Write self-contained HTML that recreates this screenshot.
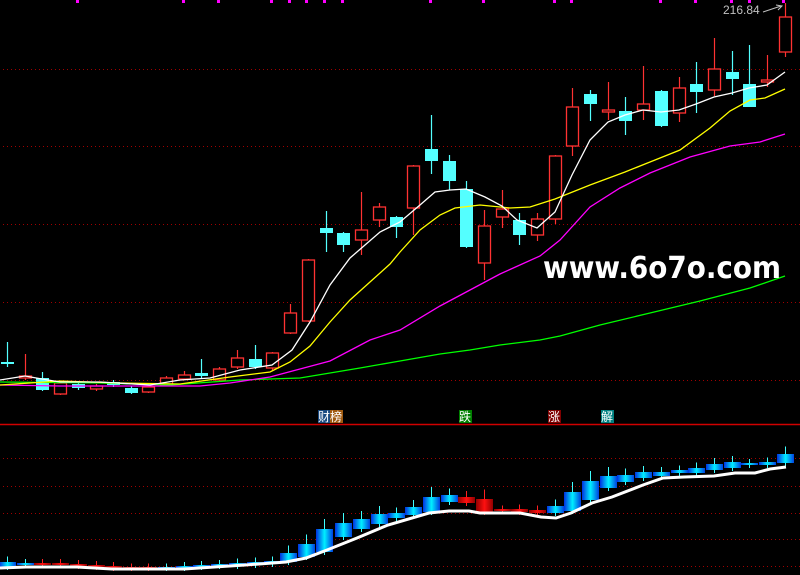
<!DOCTYPE html>
<html><head><meta charset="utf-8"><style>
html,body{margin:0;padding:0;background:#000;width:800px;height:575px;overflow:hidden}
svg{display:block}
</style></head><body>
<svg width="800" height="575" viewBox="0 0 800 575" xmlns="http://www.w3.org/2000/svg">
<defs>
<linearGradient id="bg" x1="0" x2="1" y1="0" y2="0">
<stop offset="0" stop-color="#0030e0"/><stop offset="0.5" stop-color="#00f0ff"/><stop offset="1" stop-color="#0040e0"/>
</linearGradient>
<linearGradient id="rg" x1="0" x2="1" y1="0" y2="0">
<stop offset="0" stop-color="#900000"/><stop offset="0.5" stop-color="#ff1010"/><stop offset="1" stop-color="#900000"/>
</linearGradient>
</defs>
<rect width="800" height="575" fill="#000"/>
<g stroke="#a00000" stroke-width="1" stroke-dasharray="1,3">
<line x1="3" y1="69.5" x2="800" y2="69.5"/><line x1="3" y1="146.5" x2="800" y2="146.5"/>
<line x1="3" y1="224.5" x2="800" y2="224.5"/><line x1="3" y1="302.5" x2="800" y2="302.5"/>
<line x1="3" y1="380.5" x2="800" y2="380.5"/>
<line x1="3" y1="458.5" x2="800" y2="458.5"/><line x1="3" y1="486.5" x2="800" y2="486.5"/>
<line x1="3" y1="513.5" x2="800" y2="513.5"/><line x1="3" y1="539.5" x2="800" y2="539.5"/>
<line x1="3" y1="566.5" x2="800" y2="566.5"/>
</g>
<line x1="0" y1="424.5" x2="800" y2="424.5" stroke="#d00000" stroke-width="1.5"/>
<g fill="#ff00ff">
<rect x="76" y="0" width="3" height="3"/><rect x="182" y="0" width="3" height="3"/><rect x="217" y="0" width="3" height="3"/>
<rect x="270" y="0" width="3" height="3"/><rect x="288" y="0" width="3" height="3"/><rect x="305" y="0" width="3" height="3"/>
<rect x="323" y="0" width="3" height="3"/><rect x="341" y="0" width="3" height="3"/><rect x="429" y="0" width="3" height="3"/>
<rect x="482" y="0" width="3" height="3"/><rect x="553" y="0" width="3" height="3"/><rect x="570" y="0" width="3" height="3"/>
<rect x="659" y="0" width="3" height="3"/><rect x="694" y="0" width="3" height="3"/><rect x="730" y="0" width="3" height="3"/>
<rect x="748" y="0" width="3" height="3"/><rect x="782" y="0" width="3" height="3"/>
</g>
<text x="723" y="14" font-family="Liberation Sans, sans-serif" font-size="12" fill="#c0c0c0">216.84</text>
<path d="M763 12 L781 6 M776 5 L782 6 L778 10" stroke="#c0c0c0" fill="none"/>
<g id="main" stroke-width="1.2"></g>
<g fill="none" stroke-width="1.3">
<polyline stroke="#00ff00" points="0,382 100,383 170,385 240,380 300,378 360,368 400,361 440,354 470,350 500,345 540,340 560,336 600,325 650,313 700,301 750,288 785,276"/>
<polyline stroke="#ff00ff" points="0,385 60,386 120,386 200,386 230,383 270,377 300,369 330,361 370,340 400,330 440,306 470,290 500,274 540,256 560,240 590,207 620,188 650,173 690,157 730,146 760,142 785,134"/>
<polyline stroke="#ffff00" points="0,385 60,381 120,383 180,384 230,377 270,372 290,362 310,346 330,322 350,300 370,282 390,264 400,252 420,230 440,215 455,208 480,205 510,208 530,207 555,199 590,185 625,172 650,162 680,150 710,128 730,111 750,100 765,98 785,89"/>
<polyline stroke="#ffffff" points="0,380 25,376 42,379 60,382 100,382 150,385 180,380 210,378 240,370 272,365 292,350 310,322 330,285 350,258 365,245 380,232 400,222 420,205 435,192 450,190 466,189 485,197 502,206 517,220 537,228 555,212 572,175 590,140 608,122 625,115 643,110 661,112 679,110 696,104 714,97 732,93 749,88 767,85 785,72"/>
</g>
<g id="low"></g>
<polyline fill="none" stroke="#ffffff" stroke-width="3" points="0,568 26,567 77,567 112,569 184,569 245,565 286,562 306,558 327,550 357,538 388,525 429,513 449,511 469,511 480,513 520,513 541,517 556,518 571,513 592,503 612,497 643,485 663,478 684,477 714,476 735,473 755,473 770,469 786,467"/>
<text x="543" y="278" font-family="DejaVu Sans, Liberation Sans, sans-serif" font-size="30" font-weight="bold" fill="#ffffff" textLength="238" lengthAdjust="spacingAndGlyphs">www.6o7o.com</text>
<g font-family="Liberation Sans, 'Noto Sans CJK SC', sans-serif" font-size="12" fill="#fff">
<rect x="318" y="410" width="12" height="13" fill="#1a4a80"/><text x="318" y="421">财</text>
<rect x="330" y="410" width="13" height="13" fill="#a05a10"/><text x="330" y="421">榜</text>
<rect x="459" y="410" width="13" height="13" fill="#008000"/><text x="459" y="421">跌</text>
<rect x="548" y="410" width="13" height="13" fill="#800000"/><text x="548" y="421">涨</text>
<rect x="601" y="410" width="13" height="13" fill="#008080"/><text x="601" y="421">解</text>
</g>
</svg>
<script>
var NS="http://www.w3.org/2000/svg";
function el(p,t,a){var e=document.createElementNS(NS,t);for(var k in a)e.setAttribute(k,a[k]);p.appendChild(e);return e;}
var C=[[7,362,364,342,367,'c'],[25,376,378,354,380,'r'],[42,378,390,372,391,'c'],[60,383,394,381,395,'r'],[78,384,388,382,390,'c'],[96,386,389,384,391,'r'],[113,382,385,380,387,'c'],[131,388,393,386,394,'c'],[148,387,392,385,393,'r'],[166,378,385,376,386,'r'],[184,375,379,371,380,'r'],[201,373,376,359,378,'c'],[219,369,380,367,381,'r'],[237,358,367,350,369,'r'],[255,359,367,345,369,'c'],[272,353,368,352,370,'r'],[290,313,333,304,334,'r'],[308,260,321,259,322,'r'],[326,228,233,211,252,'c'],[343,233,245,232,252,'c'],[361,230,240,192,255,'r'],[379,207,220,203,227,'r'],[396,217,227,216,238,'c'],[413,166,208,165,235,'r'],[431,149,161,115,174,'c'],[449,161,181,155,190,'c'],[466,189,247,181,248,'c'],[484,226,263,210,280,'r'],[502,209,217,190,228,'r'],[519,220,235,213,245,'c'],[537,219,235,213,241,'r'],[555,156,219,155,224,'r'],[572,107,146,88,156,'r'],[590,94,104,90,121,'c'],[608,110,112,82,120,'r'],[625,111,121,97,135,'c'],[643,104,110,66,120,'r'],[661,91,126,90,127,'c'],[679,88,113,77,122,'r'],[696,84,92,62,113,'c'],[714,69,90,38,96,'r'],[732,72,79,51,95,'c'],[749,84,107,45,107,'c'],[767,80,82,55,87,'r'],[785,17,52,3,57,'r']];
var g=document.getElementById('main');
C.forEach(function(c){var x=c[0],col=c[5]=='r'?'#ff3232':'#54ffff';
el(g,'line',{x1:x+.5,x2:x+.5,y1:c[3],y2:c[4],stroke:col});
if(c[5]=='r')el(g,'rect',{x:x-5.5,y:c[1],width:12,height:Math.max(1,c[2]-c[1]),fill:'#000',stroke:col,'stroke-width':1.3});
else el(g,'rect',{x:x-6,y:c[1],width:13,height:Math.max(2,c[2]-c[1]),fill:col});});
var L=[[7,562,567,'b'],[25,563,565,'b'],[42,563,565,'r'],[60,563,565,'r'],[78,564,566,'r'],[96,565,567,'r'],[113,566,568,'r'],[131,567,568,'r'],[148,567,568,'r'],[166,567,568,'b'],[184,566,568,'b'],[201,565,567,'b'],[219,564,566,'b'],[237,563,566,'b'],[255,562,565,'b'],[272,561,564,'b'],[288,553,562,'b'],[306,544,557,'b'],[324,529,552,'b'],[343,523,537,'b'],[361,519,529,'b'],[379,514,524,'b'],[396,513,518,'b'],[413,507,515,'b'],[431,497,512,'b'],[449,495,502,'b'],[466,497,503,'r'],[484,499,512,'r'],[502,509,510,'r'],[519,509,512,'r'],[537,510,513,'r'],[555,506,513,'b'],[572,492,511,'b'],[590,481,500,'b'],[608,476,488,'b'],[625,475,482,'b'],[643,472,478,'b'],[661,472,476,'b'],[679,470,473,'b'],[696,468,473,'b'],[714,464,470,'b'],[732,462,468,'b'],[749,463,465,'b'],[767,462,465,'b'],[785,454,463,'b']];
var lg=document.getElementById('low');
L.forEach(function(c){var x=c[0],r=c[3]=='r';var h=c[2]-c[1];
el(lg,'line',{x1:x+.5,x2:x+.5,y1:c[1]-Math.min(10,h*0.5+3),y2:c[2]+3,stroke:r?'#ff2020':'#40ffff'});
el(lg,'rect',{x:x-8,y:c[1],width:17,height:Math.max(2,h),fill:r?'url(#rg)':'url(#bg)'});});
</script>
</body></html>
